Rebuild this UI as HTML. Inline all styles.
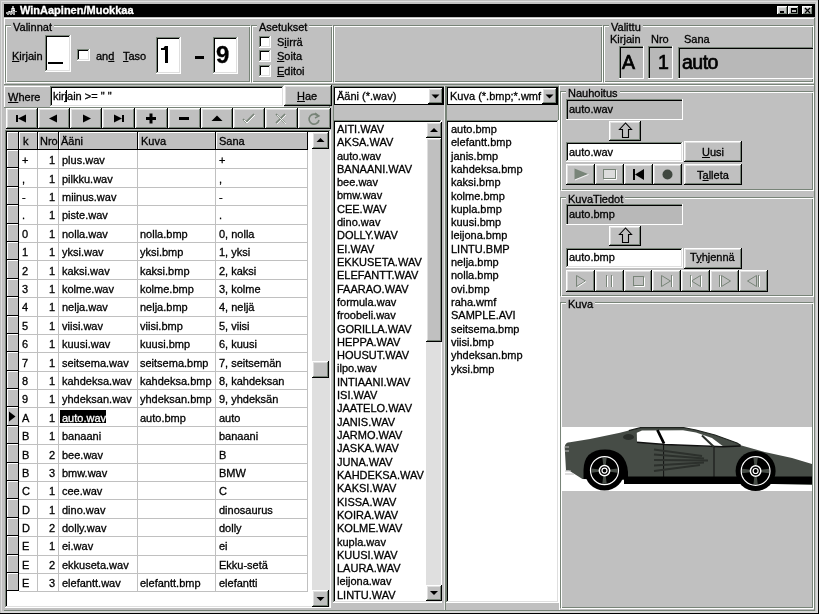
<!DOCTYPE html><html><head><meta charset="utf-8"><style>
html,body{margin:0;padding:0;}
body{width:819px;height:614px;position:relative;overflow:hidden;background:#c0c0c0;font-family:"Liberation Sans",sans-serif;font-size:11px;color:#000;}
.a{position:absolute;}
.t{position:absolute;white-space:nowrap;will-change:transform;-webkit-text-stroke:0.3px currentColor;}
u{text-decoration:underline;text-underline-offset:1px;}
</style></head><body>
<div class="a" style="left:1px;top:1px;width:816px;height:1px;background:#dfdfdf;"></div>
<div class="a" style="left:1px;top:1px;width:1px;height:611px;background:#dfdfdf;"></div>
<div class="a" style="left:816px;top:1px;width:2px;height:612px;background:#d8d8d8;"></div>
<div class="a" style="left:1px;top:611px;width:817px;height:2px;background:#d8d8d8;"></div>
<div class="a" style="left:4px;top:610px;width:555px;height:1px;background:#788478;"></div>
<div class="a" style="left:818px;top:0px;width:1px;height:614px;background:#000;"></div>
<div class="a" style="left:0px;top:613px;width:819px;height:1px;background:#000;"></div>
<div class="a" style="left:4px;top:4px;width:811px;height:13px;background:#000;"></div>
<div class="t" style="left:20px;top:3.19px;font-size:11px;line-height:14px;font-weight:bold;color:#fff;">WinAapinen/Muokkaa</div>
<svg class="a" style="left:5px;top:4px;" width="12" height="12" viewBox="0 0 12 12"><g fill="#a8a8a8"><rect x="7" y="2" width="2" height="3"/><rect x="6" y="4" width="4" height="3"/><rect x="3" y="7" width="7" height="3"/><rect x="1" y="8" width="2" height="2"/><rect x="2" y="10" width="2" height="1"/><rect x="5" y="10" width="2" height="1"/><rect x="8" y="10" width="2" height="1"/><rect x="10" y="7" width="2" height="1"/></g><g fill="#fff"><rect x="7" y="4" width="2" height="1"/><rect x="8" y="6" width="2" height="1"/><rect x="4" y="7" width="1" height="1"/><rect x="6" y="7" width="1" height="1"/></g></svg>
<div class="a" style="left:777px;top:6px;width:11px;height:9px;background:#c0c0c0;box-shadow:inset -1px -1px #000,inset 1px 1px #fff,inset -2px -2px #788478,inset 2px 2px #dfdfdf;"></div>
<div class="a" style="left:788px;top:6px;width:11px;height:9px;background:#c0c0c0;box-shadow:inset -1px -1px #000,inset 1px 1px #fff,inset -2px -2px #788478,inset 2px 2px #dfdfdf;"></div>
<div class="a" style="left:802px;top:6px;width:11px;height:9px;background:#c0c0c0;box-shadow:inset -1px -1px #000,inset 1px 1px #fff,inset -2px -2px #788478,inset 2px 2px #dfdfdf;"></div>
<div class="a" style="left:780px;top:11px;width:4px;height:2px;background:#000;"></div>
<div class="a" style="left:791px;top:8px;width:6px;height:2px;background:#000;"></div>
<div class="a" style="left:791px;top:8px;width:1px;height:5px;background:#000;"></div>
<div class="a" style="left:796px;top:8px;width:1px;height:5px;background:#000;"></div>
<div class="a" style="left:791px;top:12px;width:6px;height:1px;background:#000;"></div>
<svg class="a" style="left:802px;top:6px;" width="11" height="9" viewBox="0 0 11 9"><path d="M3 2 L8 7 M8 2 L3 7" stroke="#000" stroke-width="1.3"/></svg>
<div class="a" style="left:4px;top:18px;width:811px;height:67px;box-shadow:inset -1px -1px #788478,inset 1px 1px #fff;"></div>
<div class="a" style="left:5px;top:25px;width:245px;height:57px;border:1px solid #788478;box-sizing:border-box;"></div>
<div class="a" style="left:6px;top:26px;width:245px;height:57px;border:1px solid #fff;box-sizing:border-box;"></div>
<div class="t" style="left:11px;top:21px;height:12px;padding:0 2px;background:#c0c0c0;font-size:11px;line-height:13px;color:#c0c0c0">Valinnat</div>
<div class="t" style="left:13px;top:20.19px;font-size:11px;line-height:14px;">Valinnat</div>
<div class="t" style="left:12px;top:48.69px;font-size:11px;line-height:14px;"><u>K</u>irjain</div>
<div class="a" style="left:45px;top:35px;width:26px;height:37px;background:#fff;box-shadow:inset -1px -1px #fff,inset 1px 1px #788478,inset -2px -2px #dfdfdf,inset 2px 2px #000;"></div>
<div class="a" style="left:48px;top:62px;width:15px;height:2px;background:#000;"></div>
<div class="a" style="left:77px;top:49px;width:13px;height:12px;background:#fff;box-shadow:inset -1px -1px #fff,inset 1px 1px #788478,inset -2px -2px #dfdfdf,inset 2px 2px #000;"></div>
<div class="t" style="left:96px;top:48.69px;font-size:11px;line-height:14px;">an<u>d</u></div>
<div class="t" style="left:123px;top:48.69px;font-size:11px;line-height:14px;"><u>T</u>aso</div>
<div class="a" style="left:156px;top:37px;width:25px;height:37px;background:#fff;box-shadow:inset -1px -1px #fff,inset 1px 1px #788478,inset -2px -2px #dfdfdf,inset 2px 2px #000;"></div>
<svg class="a" style="left:156px;top:37px;" width="25" height="37" viewBox="0 0 25 37"><path d="M9 9 L12 9 L12 26 L9 26 L9 13 L5 13 L5 11 L7.5 11 L8.5 9.5Z"/></svg>
<div class="a" style="left:195px;top:56px;width:9px;height:3px;background:#000;"></div>
<div class="a" style="left:213px;top:37px;width:25px;height:37px;background:#fff;box-shadow:inset -1px -1px #fff,inset 1px 1px #788478,inset -2px -2px #dfdfdf,inset 2px 2px #000;"></div>
<div class="t" style="left:216px;top:39.68px;font-size:24px;line-height:30px;font-weight:bold;">9</div>
<div class="a" style="left:251px;top:25px;width:81px;height:57px;border:1px solid #788478;box-sizing:border-box;"></div>
<div class="a" style="left:252px;top:26px;width:81px;height:57px;border:1px solid #fff;box-sizing:border-box;"></div>
<div class="t" style="left:257px;top:21px;height:12px;padding:0 2px;background:#c0c0c0;font-size:11px;line-height:13px;color:#c0c0c0">Asetukset</div>
<div class="t" style="left:259px;top:20.19px;font-size:11px;line-height:14px;">Asetukset</div>
<div class="a" style="left:259px;top:36px;width:12px;height:12px;background:#fff;box-shadow:inset -1px -1px #fff,inset 1px 1px #788478,inset -2px -2px #dfdfdf,inset 2px 2px #000;"></div>
<div class="t" style="left:277px;top:35.19px;font-size:11px;line-height:14px;">S<u>i</u>irrä</div>
<div class="a" style="left:259px;top:50px;width:12px;height:12px;background:#fff;box-shadow:inset -1px -1px #fff,inset 1px 1px #788478,inset -2px -2px #dfdfdf,inset 2px 2px #000;"></div>
<div class="t" style="left:277px;top:49.19px;font-size:11px;line-height:14px;"><u>S</u>oita</div>
<div class="a" style="left:259px;top:65px;width:12px;height:12px;background:#fff;box-shadow:inset -1px -1px #fff,inset 1px 1px #788478,inset -2px -2px #dfdfdf,inset 2px 2px #000;"></div>
<div class="t" style="left:277px;top:64.19px;font-size:11px;line-height:14px;"><u>E</u>ditoi</div>
<div class="a" style="left:333px;top:25px;width:269px;height:57px;border:1px solid #788478;box-sizing:border-box;"></div>
<div class="a" style="left:334px;top:26px;width:269px;height:57px;border:1px solid #fff;box-sizing:border-box;"></div>
<div class="a" style="left:603px;top:25px;width:210px;height:57px;border:1px solid #788478;box-sizing:border-box;"></div>
<div class="a" style="left:604px;top:26px;width:210px;height:57px;border:1px solid #fff;box-sizing:border-box;"></div>
<div class="t" style="left:609px;top:20.5px;height:12px;padding:0 2px;background:#c0c0c0;font-size:11px;line-height:13px;color:#c0c0c0">Valittu</div>
<div class="t" style="left:611px;top:19.69px;font-size:11px;line-height:14px;">Valittu</div>
<div class="t" style="left:610px;top:32.19px;font-size:11px;line-height:14px;">Kirjain</div>
<div class="t" style="left:651px;top:32.19px;font-size:11px;line-height:14px;">Nro</div>
<div class="t" style="left:684px;top:32.19px;font-size:11px;line-height:14px;">Sana</div>
<div class="a" style="left:619px;top:46px;width:25px;height:33px;background:#b8b8b8;box-shadow:inset -1px -1px #fff,inset 1px 1px #788478,inset 2px 2px #000;"></div>
<div class="a" style="left:648px;top:46px;width:25px;height:33px;background:#b8b8b8;box-shadow:inset -1px -1px #fff,inset 1px 1px #788478,inset 2px 2px #000;"></div>
<div class="a" style="left:678px;top:47px;width:136px;height:32px;background:#b8b8b8;box-shadow:inset -1px -1px #fff,inset 1px 1px #788478,inset 2px 2px #000;"></div>
<div class="t" style="left:622px;top:49.74px;font-size:19.5px;line-height:24px;-webkit-text-stroke:0.7px #000;">A</div>
<div class="t" style="left:658px;top:49.74px;font-size:19.5px;line-height:24px;-webkit-text-stroke:0.7px #000;">1</div>
<div class="t" style="left:681.5px;top:49.74px;font-size:19.5px;line-height:24px;letter-spacing:-0.5px;-webkit-text-stroke:0.7px #000;">auto</div>
<div class="a" style="left:4px;top:86px;width:326px;height:22px;box-shadow:inset -1px -1px #788478,inset 1px 1px #fff;"></div>
<div class="t" style="left:8px;top:90.19px;font-size:11px;line-height:14px;"><u>W</u>here</div>
<div class="a" style="left:50px;top:86px;width:234px;height:21px;background:#fff;box-shadow:inset -1px -1px #fff,inset 1px 1px #788478,inset -2px -2px #dfdfdf,inset 2px 2px #000;"></div>
<div class="t" style="left:53px;top:88.89px;font-size:11px;line-height:14px;">kirjain &gt;= &quot; &quot;</div>
<div class="a" style="left:65.5px;top:90px;width:1.5px;height:12px;background:#000;"></div>
<div class="a" style="left:284px;top:85px;width:48px;height:21px;background:#c0c0c0;box-shadow:inset -1px -1px #000,inset 1px 1px #fff,inset -2px -2px #788478,inset 2px 2px #dfdfdf;"></div>
<div class="t" style="left:297px;top:89.19px;font-size:11px;line-height:14px;"><u>H</u>ae</div>
<div class="a" style="left:6px;top:108px;width:32px;height:21px;background:#c0c0c0;box-shadow:inset -1px -1px #000,inset 1px 1px #fff,inset -2px -2px #788478,inset 2px 2px #dfdfdf;"></div>
<div class="a" style="left:38px;top:108px;width:32px;height:21px;background:#c0c0c0;box-shadow:inset -1px -1px #000,inset 1px 1px #fff,inset -2px -2px #788478,inset 2px 2px #dfdfdf;"></div>
<div class="a" style="left:70px;top:108px;width:32px;height:21px;background:#c0c0c0;box-shadow:inset -1px -1px #000,inset 1px 1px #fff,inset -2px -2px #788478,inset 2px 2px #dfdfdf;"></div>
<div class="a" style="left:102px;top:108px;width:33px;height:21px;background:#c0c0c0;box-shadow:inset -1px -1px #000,inset 1px 1px #fff,inset -2px -2px #788478,inset 2px 2px #dfdfdf;"></div>
<div class="a" style="left:135px;top:108px;width:33px;height:21px;background:#c0c0c0;box-shadow:inset -1px -1px #000,inset 1px 1px #fff,inset -2px -2px #788478,inset 2px 2px #dfdfdf;"></div>
<div class="a" style="left:168px;top:108px;width:33px;height:21px;background:#c0c0c0;box-shadow:inset -1px -1px #000,inset 1px 1px #fff,inset -2px -2px #788478,inset 2px 2px #dfdfdf;"></div>
<div class="a" style="left:201px;top:108px;width:32px;height:21px;background:#c0c0c0;box-shadow:inset -1px -1px #000,inset 1px 1px #fff,inset -2px -2px #788478,inset 2px 2px #dfdfdf;"></div>
<div class="a" style="left:233px;top:108px;width:32px;height:21px;background:#c0c0c0;box-shadow:inset -1px -1px #000,inset 1px 1px #fff,inset -2px -2px #788478,inset 2px 2px #dfdfdf;"></div>
<div class="a" style="left:265px;top:108px;width:33px;height:21px;background:#c0c0c0;box-shadow:inset -1px -1px #000,inset 1px 1px #fff,inset -2px -2px #788478,inset 2px 2px #dfdfdf;"></div>
<div class="a" style="left:298px;top:108px;width:33px;height:21px;background:#c0c0c0;box-shadow:inset -1px -1px #000,inset 1px 1px #fff,inset -2px -2px #788478,inset 2px 2px #dfdfdf;"></div>
<svg class="a" style="left:6px;top:108px;" width="32" height="21" viewBox="0 0 32 21"><rect x="10" y="7" width="2" height="7"/><path d="M12 10.5 L20 6.5 L20 14.5Z"/></svg>
<svg class="a" style="left:38px;top:108px;" width="32" height="21" viewBox="0 0 32 21"><path d="M11 10.5 L19 6.5 L19 14.5Z"/></svg>
<svg class="a" style="left:70px;top:108px;" width="32" height="21" viewBox="0 0 32 21"><path d="M21 10.5 L13 6.5 L13 14.5Z"/></svg>
<svg class="a" style="left:102px;top:108px;" width="33" height="21" viewBox="0 0 33 21"><path d="M20 10.5 L12 6.5 L12 14.5Z"/><rect x="20" y="7" width="2" height="7"/></svg>
<svg class="a" style="left:135px;top:108px;" width="33" height="21" viewBox="0 0 33 21"><rect x="11" y="9" width="10" height="3"/><rect x="14.5" y="5.5" width="3" height="10"/></svg>
<svg class="a" style="left:168px;top:108px;" width="33" height="21" viewBox="0 0 33 21"><rect x="11" y="9" width="10" height="3"/></svg>
<svg class="a" style="left:201px;top:108px;" width="32" height="21" viewBox="0 0 32 21"><path d="M10.5 13 L16 7.5 L21.5 13Z"/></svg>
<svg class="a" style="left:233px;top:108px;" width="32" height="21" viewBox="0 0 32 21"><path d="M10 11 L13 14 L21 6" stroke="#788478" stroke-width="1.6" fill="none"/><path d="M11 12 L14 15 L22 7" stroke="#fff" stroke-width="1" fill="none"/></svg>
<svg class="a" style="left:265px;top:108px;" width="33" height="21" viewBox="0 0 33 21"><path d="M11 6 L20 15 M20 6 L11 15" stroke="#788478" stroke-width="1.6"/><path d="M12 7 L21 16 M21 7 L12 16" stroke="#fff" stroke-width="0.8"/></svg>
<svg class="a" style="left:298px;top:108px;" width="33" height="21" viewBox="0 0 33 21"><path d="M20 8 A5 5 0 1 0 21 12" stroke="#788478" stroke-width="1.6" fill="none"/><path d="M17 5 L21 8 L17 10" stroke="#788478" stroke-width="1.4" fill="none"/></svg>
<div class="a" style="left:5px;top:130px;width:326px;height:478px;background:#fff;box-shadow:inset -1px -1px #fff,inset 1px 1px #788478,inset -2px -2px #dfdfdf,inset 2px 2px #000;"></div>
<div class="a" style="left:7px;top:132px;width:12px;height:18px;background:#c0c0c0;box-shadow:inset -1px -1px #000,inset 1px 1px #fff;"></div>
<div class="a" style="left:19px;top:132px;width:19px;height:18px;background:#c0c0c0;box-shadow:inset -1px -1px #000,inset 1px 1px #fff;"></div>
<div class="a" style="left:38px;top:132px;width:21px;height:18px;background:#c0c0c0;box-shadow:inset -1px -1px #000,inset 1px 1px #fff;"></div>
<div class="a" style="left:59px;top:132px;width:79px;height:18px;background:#c0c0c0;box-shadow:inset -1px -1px #000,inset 1px 1px #fff;"></div>
<div class="a" style="left:138px;top:132px;width:78px;height:18px;background:#c0c0c0;box-shadow:inset -1px -1px #000,inset 1px 1px #fff;"></div>
<div class="a" style="left:216px;top:132px;width:92px;height:18px;background:#c0c0c0;box-shadow:inset -1px -1px #000,inset 1px 1px #fff;"></div>
<div class="t" style="left:22.5px;top:133.89px;font-size:11px;line-height:14px;">k</div>
<div class="t" style="left:39.5px;top:133.89px;font-size:11px;line-height:14px;">Nro</div>
<div class="t" style="left:61px;top:133.89px;font-size:11px;line-height:14px;">Ääni</div>
<div class="t" style="left:140.5px;top:133.89px;font-size:11px;line-height:14px;">Kuva</div>
<div class="t" style="left:219px;top:133.89px;font-size:11px;line-height:14px;">Sana</div>
<div class="a" style="left:7px;top:150px;width:12px;height:18px;background:#c0c0c0;box-shadow:inset -1px -1px #000,inset 1px 1px #fff;"></div>
<div class="a" style="left:19px;top:168px;width:289px;height:1px;background:#c0c0c0;"></div>
<div class="t" style="left:22px;top:153.29px;font-size:11px;line-height:14px;">+</div>
<div class="t" style="left:37px;top:153.29px;font-size:11px;line-height:14px;width:18px;text-align:right;">1</div>
<div class="t" style="left:61.5px;top:153.29px;font-size:11px;line-height:14px;">plus.wav</div>
<div class="t" style="left:140px;top:153.29px;font-size:11px;line-height:14px;"></div>
<div class="t" style="left:219px;top:153.29px;font-size:11px;line-height:14px;">+</div>
<div class="a" style="left:7px;top:168px;width:12px;height:19px;background:#c0c0c0;box-shadow:inset -1px -1px #000,inset 1px 1px #fff;"></div>
<div class="a" style="left:19px;top:187px;width:289px;height:1px;background:#c0c0c0;"></div>
<div class="t" style="left:22px;top:171.68px;font-size:11px;line-height:14px;">,</div>
<div class="t" style="left:37px;top:171.68px;font-size:11px;line-height:14px;width:18px;text-align:right;">1</div>
<div class="t" style="left:61.5px;top:171.68px;font-size:11px;line-height:14px;">pilkku.wav</div>
<div class="t" style="left:140px;top:171.68px;font-size:11px;line-height:14px;"></div>
<div class="t" style="left:219px;top:171.68px;font-size:11px;line-height:14px;">,</div>
<div class="a" style="left:7px;top:187px;width:12px;height:18px;background:#c0c0c0;box-shadow:inset -1px -1px #000,inset 1px 1px #fff;"></div>
<div class="a" style="left:19px;top:205px;width:289px;height:1px;background:#c0c0c0;"></div>
<div class="t" style="left:22px;top:190.07px;font-size:11px;line-height:14px;">-</div>
<div class="t" style="left:37px;top:190.07px;font-size:11px;line-height:14px;width:18px;text-align:right;">1</div>
<div class="t" style="left:61.5px;top:190.07px;font-size:11px;line-height:14px;">miinus.wav</div>
<div class="t" style="left:140px;top:190.07px;font-size:11px;line-height:14px;"></div>
<div class="t" style="left:219px;top:190.07px;font-size:11px;line-height:14px;">-</div>
<div class="a" style="left:7px;top:205px;width:12px;height:19px;background:#c0c0c0;box-shadow:inset -1px -1px #000,inset 1px 1px #fff;"></div>
<div class="a" style="left:19px;top:224px;width:289px;height:1px;background:#c0c0c0;"></div>
<div class="t" style="left:22px;top:208.46px;font-size:11px;line-height:14px;">.</div>
<div class="t" style="left:37px;top:208.46px;font-size:11px;line-height:14px;width:18px;text-align:right;">1</div>
<div class="t" style="left:61.5px;top:208.46px;font-size:11px;line-height:14px;">piste.wav</div>
<div class="t" style="left:140px;top:208.46px;font-size:11px;line-height:14px;"></div>
<div class="t" style="left:219px;top:208.46px;font-size:11px;line-height:14px;">.</div>
<div class="a" style="left:7px;top:224px;width:12px;height:18px;background:#c0c0c0;box-shadow:inset -1px -1px #000,inset 1px 1px #fff;"></div>
<div class="a" style="left:19px;top:242px;width:289px;height:1px;background:#c0c0c0;"></div>
<div class="t" style="left:22px;top:226.85px;font-size:11px;line-height:14px;">0</div>
<div class="t" style="left:37px;top:226.85px;font-size:11px;line-height:14px;width:18px;text-align:right;">1</div>
<div class="t" style="left:61.5px;top:226.85px;font-size:11px;line-height:14px;">nolla.wav</div>
<div class="t" style="left:140px;top:226.85px;font-size:11px;line-height:14px;">nolla.bmp</div>
<div class="t" style="left:219px;top:226.85px;font-size:11px;line-height:14px;">0, nolla</div>
<div class="a" style="left:7px;top:242px;width:12px;height:18px;background:#c0c0c0;box-shadow:inset -1px -1px #000,inset 1px 1px #fff;"></div>
<div class="a" style="left:19px;top:260px;width:289px;height:1px;background:#c0c0c0;"></div>
<div class="t" style="left:22px;top:245.24px;font-size:11px;line-height:14px;">1</div>
<div class="t" style="left:37px;top:245.24px;font-size:11px;line-height:14px;width:18px;text-align:right;">1</div>
<div class="t" style="left:61.5px;top:245.24px;font-size:11px;line-height:14px;">yksi.wav</div>
<div class="t" style="left:140px;top:245.24px;font-size:11px;line-height:14px;">yksi.bmp</div>
<div class="t" style="left:219px;top:245.24px;font-size:11px;line-height:14px;">1, yksi</div>
<div class="a" style="left:7px;top:260px;width:12px;height:19px;background:#c0c0c0;box-shadow:inset -1px -1px #000,inset 1px 1px #fff;"></div>
<div class="a" style="left:19px;top:279px;width:289px;height:1px;background:#c0c0c0;"></div>
<div class="t" style="left:22px;top:263.63px;font-size:11px;line-height:14px;">2</div>
<div class="t" style="left:37px;top:263.63px;font-size:11px;line-height:14px;width:18px;text-align:right;">1</div>
<div class="t" style="left:61.5px;top:263.63px;font-size:11px;line-height:14px;">kaksi.wav</div>
<div class="t" style="left:140px;top:263.63px;font-size:11px;line-height:14px;">kaksi.bmp</div>
<div class="t" style="left:219px;top:263.63px;font-size:11px;line-height:14px;">2, kaksi</div>
<div class="a" style="left:7px;top:279px;width:12px;height:18px;background:#c0c0c0;box-shadow:inset -1px -1px #000,inset 1px 1px #fff;"></div>
<div class="a" style="left:19px;top:297px;width:289px;height:1px;background:#c0c0c0;"></div>
<div class="t" style="left:22px;top:282.02px;font-size:11px;line-height:14px;">3</div>
<div class="t" style="left:37px;top:282.02px;font-size:11px;line-height:14px;width:18px;text-align:right;">1</div>
<div class="t" style="left:61.5px;top:282.02px;font-size:11px;line-height:14px;">kolme.wav</div>
<div class="t" style="left:140px;top:282.02px;font-size:11px;line-height:14px;">kolme.bmp</div>
<div class="t" style="left:219px;top:282.02px;font-size:11px;line-height:14px;">3, kolme</div>
<div class="a" style="left:7px;top:297px;width:12px;height:19px;background:#c0c0c0;box-shadow:inset -1px -1px #000,inset 1px 1px #fff;"></div>
<div class="a" style="left:19px;top:316px;width:289px;height:1px;background:#c0c0c0;"></div>
<div class="t" style="left:22px;top:300.41px;font-size:11px;line-height:14px;">4</div>
<div class="t" style="left:37px;top:300.41px;font-size:11px;line-height:14px;width:18px;text-align:right;">1</div>
<div class="t" style="left:61.5px;top:300.41px;font-size:11px;line-height:14px;">nelja.wav</div>
<div class="t" style="left:140px;top:300.41px;font-size:11px;line-height:14px;">nelja.bmp</div>
<div class="t" style="left:219px;top:300.41px;font-size:11px;line-height:14px;">4, neljä</div>
<div class="a" style="left:7px;top:316px;width:12px;height:18px;background:#c0c0c0;box-shadow:inset -1px -1px #000,inset 1px 1px #fff;"></div>
<div class="a" style="left:19px;top:334px;width:289px;height:1px;background:#c0c0c0;"></div>
<div class="t" style="left:22px;top:318.80px;font-size:11px;line-height:14px;">5</div>
<div class="t" style="left:37px;top:318.80px;font-size:11px;line-height:14px;width:18px;text-align:right;">1</div>
<div class="t" style="left:61.5px;top:318.80px;font-size:11px;line-height:14px;">viisi.wav</div>
<div class="t" style="left:140px;top:318.80px;font-size:11px;line-height:14px;">viisi.bmp</div>
<div class="t" style="left:219px;top:318.80px;font-size:11px;line-height:14px;">5, viisi</div>
<div class="a" style="left:7px;top:334px;width:12px;height:18px;background:#c0c0c0;box-shadow:inset -1px -1px #000,inset 1px 1px #fff;"></div>
<div class="a" style="left:19px;top:352px;width:289px;height:1px;background:#c0c0c0;"></div>
<div class="t" style="left:22px;top:337.19px;font-size:11px;line-height:14px;">6</div>
<div class="t" style="left:37px;top:337.19px;font-size:11px;line-height:14px;width:18px;text-align:right;">1</div>
<div class="t" style="left:61.5px;top:337.19px;font-size:11px;line-height:14px;">kuusi.wav</div>
<div class="t" style="left:140px;top:337.19px;font-size:11px;line-height:14px;">kuusi.bmp</div>
<div class="t" style="left:219px;top:337.19px;font-size:11px;line-height:14px;">6, kuusi</div>
<div class="a" style="left:7px;top:352px;width:12px;height:19px;background:#c0c0c0;box-shadow:inset -1px -1px #000,inset 1px 1px #fff;"></div>
<div class="a" style="left:19px;top:371px;width:289px;height:1px;background:#c0c0c0;"></div>
<div class="t" style="left:22px;top:355.58px;font-size:11px;line-height:14px;">7</div>
<div class="t" style="left:37px;top:355.58px;font-size:11px;line-height:14px;width:18px;text-align:right;">1</div>
<div class="t" style="left:61.5px;top:355.58px;font-size:11px;line-height:14px;">seitsema.wav</div>
<div class="t" style="left:140px;top:355.58px;font-size:11px;line-height:14px;">seitsema.bmp</div>
<div class="t" style="left:219px;top:355.58px;font-size:11px;line-height:14px;">7, seitsemän</div>
<div class="a" style="left:7px;top:371px;width:12px;height:18px;background:#c0c0c0;box-shadow:inset -1px -1px #000,inset 1px 1px #fff;"></div>
<div class="a" style="left:19px;top:389px;width:289px;height:1px;background:#c0c0c0;"></div>
<div class="t" style="left:22px;top:373.97px;font-size:11px;line-height:14px;">8</div>
<div class="t" style="left:37px;top:373.97px;font-size:11px;line-height:14px;width:18px;text-align:right;">1</div>
<div class="t" style="left:61.5px;top:373.97px;font-size:11px;line-height:14px;">kahdeksa.wav</div>
<div class="t" style="left:140px;top:373.97px;font-size:11px;line-height:14px;">kahdeksa.bmp</div>
<div class="t" style="left:219px;top:373.97px;font-size:11px;line-height:14px;">8, kahdeksan</div>
<div class="a" style="left:7px;top:389px;width:12px;height:18px;background:#c0c0c0;box-shadow:inset -1px -1px #000,inset 1px 1px #fff;"></div>
<div class="a" style="left:19px;top:407px;width:289px;height:1px;background:#c0c0c0;"></div>
<div class="t" style="left:22px;top:392.36px;font-size:11px;line-height:14px;">9</div>
<div class="t" style="left:37px;top:392.36px;font-size:11px;line-height:14px;width:18px;text-align:right;">1</div>
<div class="t" style="left:61.5px;top:392.36px;font-size:11px;line-height:14px;">yhdeksan.wav</div>
<div class="t" style="left:140px;top:392.36px;font-size:11px;line-height:14px;">yhdeksan.bmp</div>
<div class="t" style="left:219px;top:392.36px;font-size:11px;line-height:14px;">9, yhdeksän</div>
<div class="a" style="left:7px;top:407px;width:12px;height:19px;background:#c0c0c0;box-shadow:inset -1px -1px #000,inset 1px 1px #fff;"></div>
<div class="a" style="left:19px;top:426px;width:289px;height:1px;background:#c0c0c0;"></div>
<div class="t" style="left:22px;top:410.75px;font-size:11px;line-height:14px;">A</div>
<div class="t" style="left:37px;top:410.75px;font-size:11px;line-height:14px;width:18px;text-align:right;">1</div>
<div class="a" style="left:60px;top:410px;width:46px;height:13px;background:#000;"></div>
<div class="t" style="left:61.5px;top:410.75px;font-size:11px;line-height:14px;color:#fff;">auto.wav</div>
<div class="t" style="left:140px;top:410.75px;font-size:11px;line-height:14px;">auto.bmp</div>
<div class="t" style="left:219px;top:410.75px;font-size:11px;line-height:14px;">auto</div>
<div class="a" style="left:7px;top:426px;width:12px;height:18px;background:#c0c0c0;box-shadow:inset -1px -1px #000,inset 1px 1px #fff;"></div>
<div class="a" style="left:19px;top:444px;width:289px;height:1px;background:#c0c0c0;"></div>
<div class="t" style="left:22px;top:429.14px;font-size:11px;line-height:14px;">B</div>
<div class="t" style="left:37px;top:429.14px;font-size:11px;line-height:14px;width:18px;text-align:right;">1</div>
<div class="t" style="left:61.5px;top:429.14px;font-size:11px;line-height:14px;">banaani</div>
<div class="t" style="left:140px;top:429.14px;font-size:11px;line-height:14px;"></div>
<div class="t" style="left:219px;top:429.14px;font-size:11px;line-height:14px;">banaani</div>
<div class="a" style="left:7px;top:444px;width:12px;height:19px;background:#c0c0c0;box-shadow:inset -1px -1px #000,inset 1px 1px #fff;"></div>
<div class="a" style="left:19px;top:463px;width:289px;height:1px;background:#c0c0c0;"></div>
<div class="t" style="left:22px;top:447.53px;font-size:11px;line-height:14px;">B</div>
<div class="t" style="left:37px;top:447.53px;font-size:11px;line-height:14px;width:18px;text-align:right;">2</div>
<div class="t" style="left:61.5px;top:447.53px;font-size:11px;line-height:14px;">bee.wav</div>
<div class="t" style="left:140px;top:447.53px;font-size:11px;line-height:14px;"></div>
<div class="t" style="left:219px;top:447.53px;font-size:11px;line-height:14px;">B</div>
<div class="a" style="left:7px;top:463px;width:12px;height:18px;background:#c0c0c0;box-shadow:inset -1px -1px #000,inset 1px 1px #fff;"></div>
<div class="a" style="left:19px;top:481px;width:289px;height:1px;background:#c0c0c0;"></div>
<div class="t" style="left:22px;top:465.92px;font-size:11px;line-height:14px;">B</div>
<div class="t" style="left:37px;top:465.92px;font-size:11px;line-height:14px;width:18px;text-align:right;">3</div>
<div class="t" style="left:61.5px;top:465.92px;font-size:11px;line-height:14px;">bmw.wav</div>
<div class="t" style="left:140px;top:465.92px;font-size:11px;line-height:14px;"></div>
<div class="t" style="left:219px;top:465.92px;font-size:11px;line-height:14px;">BMW</div>
<div class="a" style="left:7px;top:481px;width:12px;height:18px;background:#c0c0c0;box-shadow:inset -1px -1px #000,inset 1px 1px #fff;"></div>
<div class="a" style="left:19px;top:499px;width:289px;height:1px;background:#c0c0c0;"></div>
<div class="t" style="left:22px;top:484.31px;font-size:11px;line-height:14px;">C</div>
<div class="t" style="left:37px;top:484.31px;font-size:11px;line-height:14px;width:18px;text-align:right;">1</div>
<div class="t" style="left:61.5px;top:484.31px;font-size:11px;line-height:14px;">cee.wav</div>
<div class="t" style="left:140px;top:484.31px;font-size:11px;line-height:14px;"></div>
<div class="t" style="left:219px;top:484.31px;font-size:11px;line-height:14px;">C</div>
<div class="a" style="left:7px;top:499px;width:12px;height:19px;background:#c0c0c0;box-shadow:inset -1px -1px #000,inset 1px 1px #fff;"></div>
<div class="a" style="left:19px;top:518px;width:289px;height:1px;background:#c0c0c0;"></div>
<div class="t" style="left:22px;top:502.70px;font-size:11px;line-height:14px;">D</div>
<div class="t" style="left:37px;top:502.70px;font-size:11px;line-height:14px;width:18px;text-align:right;">1</div>
<div class="t" style="left:61.5px;top:502.70px;font-size:11px;line-height:14px;">dino.wav</div>
<div class="t" style="left:140px;top:502.70px;font-size:11px;line-height:14px;"></div>
<div class="t" style="left:219px;top:502.70px;font-size:11px;line-height:14px;">dinosaurus</div>
<div class="a" style="left:7px;top:518px;width:12px;height:18px;background:#c0c0c0;box-shadow:inset -1px -1px #000,inset 1px 1px #fff;"></div>
<div class="a" style="left:19px;top:536px;width:289px;height:1px;background:#c0c0c0;"></div>
<div class="t" style="left:22px;top:521.09px;font-size:11px;line-height:14px;">D</div>
<div class="t" style="left:37px;top:521.09px;font-size:11px;line-height:14px;width:18px;text-align:right;">2</div>
<div class="t" style="left:61.5px;top:521.09px;font-size:11px;line-height:14px;">dolly.wav</div>
<div class="t" style="left:140px;top:521.09px;font-size:11px;line-height:14px;"></div>
<div class="t" style="left:219px;top:521.09px;font-size:11px;line-height:14px;">dolly</div>
<div class="a" style="left:7px;top:536px;width:12px;height:19px;background:#c0c0c0;box-shadow:inset -1px -1px #000,inset 1px 1px #fff;"></div>
<div class="a" style="left:19px;top:555px;width:289px;height:1px;background:#c0c0c0;"></div>
<div class="t" style="left:22px;top:539.48px;font-size:11px;line-height:14px;">E</div>
<div class="t" style="left:37px;top:539.48px;font-size:11px;line-height:14px;width:18px;text-align:right;">1</div>
<div class="t" style="left:61.5px;top:539.48px;font-size:11px;line-height:14px;">ei.wav</div>
<div class="t" style="left:140px;top:539.48px;font-size:11px;line-height:14px;"></div>
<div class="t" style="left:219px;top:539.48px;font-size:11px;line-height:14px;">ei</div>
<div class="a" style="left:7px;top:555px;width:12px;height:18px;background:#c0c0c0;box-shadow:inset -1px -1px #000,inset 1px 1px #fff;"></div>
<div class="a" style="left:19px;top:573px;width:289px;height:1px;background:#c0c0c0;"></div>
<div class="t" style="left:22px;top:557.87px;font-size:11px;line-height:14px;">E</div>
<div class="t" style="left:37px;top:557.87px;font-size:11px;line-height:14px;width:18px;text-align:right;">2</div>
<div class="t" style="left:61.5px;top:557.87px;font-size:11px;line-height:14px;">ekkuseta.wav</div>
<div class="t" style="left:140px;top:557.87px;font-size:11px;line-height:14px;"></div>
<div class="t" style="left:219px;top:557.87px;font-size:11px;line-height:14px;">Ekku-setä</div>
<div class="a" style="left:7px;top:573px;width:12px;height:18px;background:#c0c0c0;box-shadow:inset -1px -1px #000,inset 1px 1px #fff;"></div>
<div class="a" style="left:19px;top:591px;width:289px;height:1px;background:#c0c0c0;"></div>
<div class="t" style="left:22px;top:576.26px;font-size:11px;line-height:14px;">E</div>
<div class="t" style="left:37px;top:576.26px;font-size:11px;line-height:14px;width:18px;text-align:right;">3</div>
<div class="t" style="left:61.5px;top:576.26px;font-size:11px;line-height:14px;">elefantt.wav</div>
<div class="t" style="left:140px;top:576.26px;font-size:11px;line-height:14px;">elefantt.bmp</div>
<div class="t" style="left:219px;top:576.26px;font-size:11px;line-height:14px;">elefantti</div>
<div class="a" style="left:37px;top:150px;width:1px;height:441px;background:#c0c0c0;"></div>
<div class="a" style="left:58px;top:150px;width:1px;height:441px;background:#c0c0c0;"></div>
<div class="a" style="left:137px;top:150px;width:1px;height:441px;background:#c0c0c0;"></div>
<div class="a" style="left:215px;top:150px;width:1px;height:441px;background:#c0c0c0;"></div>
<div class="a" style="left:307px;top:150px;width:1px;height:441px;background:#c0c0c0;"></div>
<svg class="a" style="left:8px;top:411px;" width="9" height="12" viewBox="0 0 9 12"><path d="M1 0.5 L7.5 5.5 L1 10.5Z"/></svg>
<div class="a" style="left:312px;top:132px;width:17px;height:475px;background:#dfdfdf;"></div>
<div class="a" style="left:312px;top:132px;width:17px;height:17px;background:#c0c0c0;box-shadow:inset -1px -1px #000,inset 1px 1px #fff,inset -2px -2px #788478,inset 2px 2px #dfdfdf;"></div>
<svg class="a" style="left:312px;top:132px;" width="17" height="17" viewBox="0 0 17 17"><path d="M4.5 10 L8.5 6 L12.5 10Z"/></svg>
<div class="a" style="left:312px;top:590px;width:17px;height:17px;background:#c0c0c0;box-shadow:inset -1px -1px #000,inset 1px 1px #fff,inset -2px -2px #788478,inset 2px 2px #dfdfdf;"></div>
<svg class="a" style="left:312px;top:590px;" width="17" height="17" viewBox="0 0 17 17"><path d="M4.5 7 L8.5 11 L12.5 7Z"/></svg>
<div class="a" style="left:312px;top:361px;width:17px;height:17px;background:#c0c0c0;box-shadow:inset -1px -1px #000,inset 1px 1px #fff,inset -2px -2px #788478,inset 2px 2px #dfdfdf;"></div>
<div class="a" style="left:333px;top:86px;width:112px;height:34px;background:#c0c0c0;box-shadow:inset 1px 0 #788478,inset -1px 0 #788478;"></div>
<div class="a" style="left:446px;top:86px;width:113px;height:34px;background:#c0c0c0;box-shadow:inset 1px 0 #788478,inset -1px 0 #788478;"></div>
<div class="a" style="left:333px;top:86px;width:111px;height:19px;background:#fff;box-shadow:inset 1px 1px #788478,inset 2px 2px #000,inset -1px -1px #000;"></div>
<div class="t" style="left:337px;top:89.19px;font-size:11px;line-height:14px;">Ääni (*.wav)</div>
<div class="a" style="left:428px;top:88px;width:15px;height:16px;background:#c0c0c0;box-shadow:inset -1px -1px #000,inset 1px 1px #fff,inset -2px -2px #788478,inset 2px 2px #dfdfdf;"></div>
<svg class="a" style="left:428px;top:88px;" width="15" height="16" viewBox="0 0 15 16"><path d="M3.5 6.5 L7.5 10.5 L11.5 6.5Z"/></svg>
<div class="a" style="left:446px;top:86px;width:112px;height:19px;background:#fff;box-shadow:inset 1px 1px #788478,inset 2px 2px #000,inset -1px -1px #000;"></div>
<div class="t" style="left:450px;top:89.19px;font-size:11px;line-height:14px;">Kuva (*.bmp;*.wmf</div>
<div class="a" style="left:542px;top:88px;width:15px;height:16px;background:#c0c0c0;box-shadow:inset -1px -1px #000,inset 1px 1px #fff,inset -2px -2px #788478,inset 2px 2px #dfdfdf;"></div>
<svg class="a" style="left:542px;top:88px;" width="15" height="16" viewBox="0 0 15 16"><path d="M3.5 6.5 L7.5 10.5 L11.5 6.5Z"/></svg>
<div class="a" style="left:333px;top:120px;width:109px;height:483px;background:#fff;box-shadow:inset -1px -1px #fff,inset 1px 1px #788478,inset -2px -2px #dfdfdf,inset 2px 2px #000;"></div>
<div class="a" style="left:446px;top:120px;width:113px;height:483px;background:#fff;box-shadow:inset -1px -1px #fff,inset 1px 1px #788478,inset -2px -2px #dfdfdf,inset 2px 2px #000;"></div>
<div class="t" style="left:337px;top:121.89px;font-size:11px;line-height:14px;">AITI.WAV</div>
<div class="t" style="left:337px;top:135.20px;font-size:11px;line-height:14px;">AKSA.WAV</div>
<div class="t" style="left:337px;top:148.51px;font-size:11px;line-height:14px;">auto.wav</div>
<div class="t" style="left:337px;top:161.82px;font-size:11px;line-height:14px;">BANAANI.WAV</div>
<div class="t" style="left:337px;top:175.13px;font-size:11px;line-height:14px;">bee.wav</div>
<div class="t" style="left:337px;top:188.44px;font-size:11px;line-height:14px;">bmw.wav</div>
<div class="t" style="left:337px;top:201.75px;font-size:11px;line-height:14px;">CEE.WAV</div>
<div class="t" style="left:337px;top:215.06px;font-size:11px;line-height:14px;">dino.wav</div>
<div class="t" style="left:337px;top:228.37px;font-size:11px;line-height:14px;">DOLLY.WAV</div>
<div class="t" style="left:337px;top:241.68px;font-size:11px;line-height:14px;">EI.WAV</div>
<div class="t" style="left:337px;top:254.99px;font-size:11px;line-height:14px;">EKKUSETA.WAV</div>
<div class="t" style="left:337px;top:268.30px;font-size:11px;line-height:14px;">ELEFANTT.WAV</div>
<div class="t" style="left:337px;top:281.61px;font-size:11px;line-height:14px;">FAARAO.WAV</div>
<div class="t" style="left:337px;top:294.92px;font-size:11px;line-height:14px;">formula.wav</div>
<div class="t" style="left:337px;top:308.23px;font-size:11px;line-height:14px;">froobeli.wav</div>
<div class="t" style="left:337px;top:321.54px;font-size:11px;line-height:14px;">GORILLA.WAV</div>
<div class="t" style="left:337px;top:334.85px;font-size:11px;line-height:14px;">HEPPA.WAV</div>
<div class="t" style="left:337px;top:348.16px;font-size:11px;line-height:14px;">HOUSUT.WAV</div>
<div class="t" style="left:337px;top:361.47px;font-size:11px;line-height:14px;">ilpo.wav</div>
<div class="t" style="left:337px;top:374.78px;font-size:11px;line-height:14px;">INTIAANI.WAV</div>
<div class="t" style="left:337px;top:388.09px;font-size:11px;line-height:14px;">ISI.WAV</div>
<div class="t" style="left:337px;top:401.40px;font-size:11px;line-height:14px;">JAATELO.WAV</div>
<div class="t" style="left:337px;top:414.71px;font-size:11px;line-height:14px;">JANIS.WAV</div>
<div class="t" style="left:337px;top:428.02px;font-size:11px;line-height:14px;">JARMO.WAV</div>
<div class="t" style="left:337px;top:441.33px;font-size:11px;line-height:14px;">JASKA.WAV</div>
<div class="t" style="left:337px;top:454.64px;font-size:11px;line-height:14px;">JUNA.WAV</div>
<div class="t" style="left:337px;top:467.95px;font-size:11px;line-height:14px;">KAHDEKSA.WAV</div>
<div class="t" style="left:337px;top:481.26px;font-size:11px;line-height:14px;">KAKSI.WAV</div>
<div class="t" style="left:337px;top:494.57px;font-size:11px;line-height:14px;">KISSA.WAV</div>
<div class="t" style="left:337px;top:507.88px;font-size:11px;line-height:14px;">KOIRA.WAV</div>
<div class="t" style="left:337px;top:521.19px;font-size:11px;line-height:14px;">KOLME.WAV</div>
<div class="t" style="left:337px;top:534.50px;font-size:11px;line-height:14px;">kupla.wav</div>
<div class="t" style="left:337px;top:547.81px;font-size:11px;line-height:14px;">KUUSI.WAV</div>
<div class="t" style="left:337px;top:561.12px;font-size:11px;line-height:14px;">LAURA.WAV</div>
<div class="t" style="left:337px;top:574.43px;font-size:11px;line-height:14px;">leijona.wav</div>
<div class="t" style="left:337px;top:587.74px;font-size:11px;line-height:14px;">LINTU.WAV</div>
<div class="t" style="left:451px;top:121.99px;font-size:11px;line-height:14px;">auto.bmp</div>
<div class="t" style="left:451px;top:135.30px;font-size:11px;line-height:14px;">elefantt.bmp</div>
<div class="t" style="left:451px;top:148.61px;font-size:11px;line-height:14px;">janis.bmp</div>
<div class="t" style="left:451px;top:161.92px;font-size:11px;line-height:14px;">kahdeksa.bmp</div>
<div class="t" style="left:451px;top:175.23px;font-size:11px;line-height:14px;">kaksi.bmp</div>
<div class="t" style="left:451px;top:188.54px;font-size:11px;line-height:14px;">kolme.bmp</div>
<div class="t" style="left:451px;top:201.85px;font-size:11px;line-height:14px;">kupla.bmp</div>
<div class="t" style="left:451px;top:215.16px;font-size:11px;line-height:14px;">kuusi.bmp</div>
<div class="t" style="left:451px;top:228.47px;font-size:11px;line-height:14px;">leijona.bmp</div>
<div class="t" style="left:451px;top:241.78px;font-size:11px;line-height:14px;">LINTU.BMP</div>
<div class="t" style="left:451px;top:255.09px;font-size:11px;line-height:14px;">nelja.bmp</div>
<div class="t" style="left:451px;top:268.40px;font-size:11px;line-height:14px;">nolla.bmp</div>
<div class="t" style="left:451px;top:281.71px;font-size:11px;line-height:14px;">ovi.bmp</div>
<div class="t" style="left:451px;top:295.02px;font-size:11px;line-height:14px;">raha.wmf</div>
<div class="t" style="left:451px;top:308.33px;font-size:11px;line-height:14px;">SAMPLE.AVI</div>
<div class="t" style="left:451px;top:321.64px;font-size:11px;line-height:14px;">seitsema.bmp</div>
<div class="t" style="left:451px;top:334.95px;font-size:11px;line-height:14px;">viisi.bmp</div>
<div class="t" style="left:451px;top:348.26px;font-size:11px;line-height:14px;">yhdeksan.bmp</div>
<div class="t" style="left:451px;top:361.57px;font-size:11px;line-height:14px;">yksi.bmp</div>
<div class="a" style="left:445px;top:86px;width:1px;height:524px;background:#788478;"></div>
<div class="a" style="left:444px;top:86px;width:1px;height:524px;background:#e8e8e8;"></div>
<div class="a" style="left:426px;top:123px;width:15px;height:476px;background:#dfdfdf;"></div>
<div class="a" style="left:426px;top:122px;width:16px;height:16px;background:#c0c0c0;box-shadow:inset -1px -1px #000,inset 1px 1px #fff,inset -2px -2px #788478,inset 2px 2px #dfdfdf;"></div>
<svg class="a" style="left:426px;top:122px;" width="16" height="16" viewBox="0 0 16 16"><path d="M4 10 L8 6 L12 10Z"/></svg>
<div class="a" style="left:426px;top:138px;width:16px;height:204px;background:#c0c0c0;box-shadow:inset -1px -1px #000,inset 1px 1px #fff,inset -2px -2px #788478,inset 2px 2px #dfdfdf;"></div>
<div class="a" style="left:426px;top:585px;width:16px;height:16px;background:#c0c0c0;box-shadow:inset -1px -1px #000,inset 1px 1px #fff,inset -2px -2px #788478,inset 2px 2px #dfdfdf;"></div>
<svg class="a" style="left:426px;top:585px;" width="16" height="16" viewBox="0 0 16 16"><path d="M4 6 L8 10 L12 6Z"/></svg>
<div class="a" style="left:559px;top:85px;width:256px;height:526px;box-shadow:inset -1px -1px #788478,inset 1px 1px #fff;"></div>
<div class="a" style="left:560px;top:91px;width:253px;height:99px;border:1px solid #788478;box-sizing:border-box;"></div>
<div class="a" style="left:561px;top:92px;width:253px;height:99px;border:1px solid #fff;box-sizing:border-box;"></div>
<div class="t" style="left:566px;top:86.5px;height:12px;padding:0 2px;background:#c0c0c0;font-size:11px;line-height:13px;color:#c0c0c0">Nauhoitus</div>
<div class="t" style="left:568px;top:85.69px;font-size:11px;line-height:14px;">Nauhoitus</div>
<div class="a" style="left:566px;top:99px;width:117px;height:21px;background:#b8b8b8;box-shadow:inset -1px -1px #fff,inset 1px 1px #788478,inset 2px 2px #000;"></div>
<div class="t" style="left:569px;top:101.69px;font-size:11px;line-height:14px;">auto.wav</div>
<div class="a" style="left:609px;top:121px;width:32px;height:20px;background:#c0c0c0;box-shadow:inset -1px -1px #000,inset 1px 1px #fff,inset -2px -2px #788478,inset 2px 2px #dfdfdf;"></div>
<svg class="a" style="left:609px;top:121px;" width="32" height="20" viewBox="0 0 32 20"><path d="M16.5 2 L10.5 8.5 L13.5 8.5 L13.5 16.5 L19.5 16.5 L19.5 8.5 L22.5 8.5Z" fill="#c0c0c0" stroke="#000" stroke-width="1.1"/></svg>
<div class="a" style="left:566px;top:142px;width:117px;height:20px;background:#fff;box-shadow:inset -1px -1px #fff,inset 1px 1px #788478,inset -2px -2px #dfdfdf,inset 2px 2px #000;"></div>
<div class="t" style="left:569px;top:145.19px;font-size:11px;line-height:14px;">auto.wav</div>
<div class="a" style="left:684px;top:141px;width:58px;height:21px;background:#c0c0c0;box-shadow:inset -1px -1px #000,inset 1px 1px #fff,inset -2px -2px #788478,inset 2px 2px #dfdfdf;"></div>
<div class="t" style="left:702px;top:144.69px;font-size:11px;line-height:14px;"><u>U</u>usi</div>
<div class="a" style="left:684px;top:164px;width:58px;height:21px;background:#c0c0c0;box-shadow:inset -1px -1px #000,inset 1px 1px #fff,inset -2px -2px #788478,inset 2px 2px #dfdfdf;"></div>
<div class="t" style="left:697px;top:167.69px;font-size:11px;line-height:14px;">T<u>a</u>lleta</div>
<div class="a" style="left:566px;top:164px;width:29px;height:21px;background:#c0c0c0;box-shadow:inset -1px -1px #000,inset 1px 1px #fff,inset -2px -2px #788478,inset 2px 2px #dfdfdf;"></div>
<div class="a" style="left:595px;top:164px;width:29px;height:21px;background:#c0c0c0;box-shadow:inset -1px -1px #000,inset 1px 1px #fff,inset -2px -2px #788478,inset 2px 2px #dfdfdf;"></div>
<div class="a" style="left:624px;top:164px;width:29px;height:21px;background:#c0c0c0;box-shadow:inset -1px -1px #000,inset 1px 1px #fff,inset -2px -2px #788478,inset 2px 2px #dfdfdf;"></div>
<div class="a" style="left:653px;top:164px;width:29px;height:21px;background:#c0c0c0;box-shadow:inset -1px -1px #000,inset 1px 1px #fff,inset -2px -2px #788478,inset 2px 2px #dfdfdf;"></div>
<svg class="a" style="left:566px;top:164px;" width="29" height="21" viewBox="0 0 29 21"><path d="M8.5 4.5 L22 10 L8.5 15.5Z" fill="#788478"/><path d="M9 16 L22.5 10.5" stroke="#fff" stroke-width="0.8"/></svg>
<svg class="a" style="left:595px;top:164px;" width="29" height="21" viewBox="0 0 29 21"><rect x="8.5" y="5.5" width="12" height="9" fill="#dcdcdc" stroke="#788478"/><path d="M9 15.5 H21.5 V6" stroke="#fff" fill="none"/></svg>
<svg class="a" style="left:624px;top:164px;" width="29" height="21" viewBox="0 0 29 21"><rect x="9" y="5" width="2" height="11"/><path d="M11 10.5 L20 5 L20 16Z"/></svg>
<svg class="a" style="left:653px;top:164px;" width="29" height="21" viewBox="0 0 29 21"><circle cx="14.5" cy="10.5" r="5" fill="#404840"/></svg>
<div class="a" style="left:560px;top:197px;width:253px;height:99px;border:1px solid #788478;box-sizing:border-box;"></div>
<div class="a" style="left:561px;top:198px;width:253px;height:99px;border:1px solid #fff;box-sizing:border-box;"></div>
<div class="t" style="left:566px;top:192.8px;height:12px;padding:0 2px;background:#c0c0c0;font-size:11px;line-height:13px;color:#c0c0c0">KuvaTiedot</div>
<div class="t" style="left:568px;top:191.99px;font-size:11px;line-height:14px;">KuvaTiedot</div>
<div class="a" style="left:566px;top:204px;width:117px;height:21px;background:#b8b8b8;box-shadow:inset -1px -1px #fff,inset 1px 1px #788478,inset 2px 2px #000;"></div>
<div class="t" style="left:569px;top:207.19px;font-size:11px;line-height:14px;">auto.bmp</div>
<div class="a" style="left:609px;top:226px;width:32px;height:20px;background:#c0c0c0;box-shadow:inset -1px -1px #000,inset 1px 1px #fff,inset -2px -2px #788478,inset 2px 2px #dfdfdf;"></div>
<svg class="a" style="left:609px;top:226px;" width="32" height="20" viewBox="0 0 32 20"><path d="M16.5 2 L10.5 8.5 L13.5 8.5 L13.5 16.5 L19.5 16.5 L19.5 8.5 L22.5 8.5Z" fill="#c0c0c0" stroke="#000" stroke-width="1.1"/></svg>
<div class="a" style="left:566px;top:248px;width:117px;height:20px;background:#fff;box-shadow:inset -1px -1px #fff,inset 1px 1px #788478,inset -2px -2px #dfdfdf,inset 2px 2px #000;"></div>
<div class="t" style="left:569px;top:250.19px;font-size:11px;line-height:14px;">auto.bmp</div>
<div class="a" style="left:684px;top:248px;width:58px;height:21px;background:#c0c0c0;box-shadow:inset -1px -1px #000,inset 1px 1px #fff,inset -2px -2px #788478,inset 2px 2px #dfdfdf;"></div>
<div class="t" style="left:690px;top:250.19px;font-size:11px;line-height:14px;">T<u>y</u>hjennä</div>
<div class="a" style="left:566px;top:270px;width:29px;height:22px;background:#c0c0c0;box-shadow:inset -1px -1px #000,inset 1px 1px #fff,inset -2px -2px #788478,inset 2px 2px #dfdfdf;"></div>
<div class="a" style="left:595px;top:270px;width:29px;height:22px;background:#c0c0c0;box-shadow:inset -1px -1px #000,inset 1px 1px #fff,inset -2px -2px #788478,inset 2px 2px #dfdfdf;"></div>
<div class="a" style="left:624px;top:270px;width:28px;height:22px;background:#c0c0c0;box-shadow:inset -1px -1px #000,inset 1px 1px #fff,inset -2px -2px #788478,inset 2px 2px #dfdfdf;"></div>
<div class="a" style="left:652px;top:270px;width:29px;height:22px;background:#c0c0c0;box-shadow:inset -1px -1px #000,inset 1px 1px #fff,inset -2px -2px #788478,inset 2px 2px #dfdfdf;"></div>
<div class="a" style="left:681px;top:270px;width:29px;height:22px;background:#c0c0c0;box-shadow:inset -1px -1px #000,inset 1px 1px #fff,inset -2px -2px #788478,inset 2px 2px #dfdfdf;"></div>
<div class="a" style="left:710px;top:270px;width:29px;height:22px;background:#c0c0c0;box-shadow:inset -1px -1px #000,inset 1px 1px #fff,inset -2px -2px #788478,inset 2px 2px #dfdfdf;"></div>
<div class="a" style="left:739px;top:270px;width:29px;height:22px;background:#c0c0c0;box-shadow:inset -1px -1px #000,inset 1px 1px #fff,inset -2px -2px #788478,inset 2px 2px #dfdfdf;"></div>
<svg class="a" style="left:566px;top:270px;" width="29" height="22" viewBox="0 0 29 22"><path d="M10.5 5.5 L19.5 11 L10.5 16.5Z" stroke="#788478" fill="none" stroke-width="1"/><path d="M11.5 17 L20 11.5" stroke="#fff" fill="none" stroke-width="1"/></svg>
<svg class="a" style="left:595px;top:270px;" width="29" height="22" viewBox="0 0 29 22"><path d="M11.5 5 V17 M16.5 5 V17" stroke="#788478" fill="none" stroke-width="1"/><path d="M12.5 6 V17 M17.5 6 V17" stroke="#fff" fill="none" stroke-width="1"/></svg>
<svg class="a" style="left:624px;top:270px;" width="29" height="22" viewBox="0 0 29 22"><rect x="9.5" y="6.5" width="10" height="9" stroke="#788478" fill="none" stroke-width="1"/><path d="M10.5 16.5 H20.5 V7.5" stroke="#fff" fill="none" stroke-width="1"/></svg>
<svg class="a" style="left:652px;top:270px;" width="29" height="22" viewBox="0 0 29 22"><path d="M9.5 5.5 L18.5 11 L9.5 16.5Z M19.5 5 V17" stroke="#788478" fill="none" stroke-width="1"/><path d="M20.5 6 V17" stroke="#fff" fill="none" stroke-width="1"/></svg>
<svg class="a" style="left:681px;top:270px;" width="29" height="22" viewBox="0 0 29 22"><path d="M9.5 5 V17 M19.5 5.5 L10.5 11 L19.5 16.5Z" stroke="#788478" fill="none" stroke-width="1"/><path d="M10.5 6 V17 M20.5 6 V17" stroke="#fff" fill="none" stroke-width="1"/></svg>
<svg class="a" style="left:710px;top:270px;" width="29" height="22" viewBox="0 0 29 22"><path d="M9.5 5 V17 M11.5 5.5 L20.5 11 L11.5 16.5Z" stroke="#788478" fill="none" stroke-width="1"/><path d="M10.5 6 V17" stroke="#fff" fill="none" stroke-width="1"/></svg>
<svg class="a" style="left:739px;top:270px;" width="29" height="22" viewBox="0 0 29 22"><path d="M19.5 5 V17 M17.5 5.5 L8.5 11 L17.5 16.5Z" stroke="#788478" fill="none" stroke-width="1"/><path d="M20.5 6 V17" stroke="#fff" fill="none" stroke-width="1"/></svg>
<div class="a" style="left:560px;top:302px;width:253px;height:306px;border:1px solid #788478;box-sizing:border-box;"></div>
<div class="a" style="left:561px;top:303px;width:253px;height:306px;border:1px solid #fff;box-sizing:border-box;"></div>
<div class="t" style="left:566px;top:297.6px;height:12px;padding:0 2px;background:#c0c0c0;font-size:11px;line-height:13px;color:#c0c0c0">Kuva</div>
<div class="t" style="left:568px;top:296.79px;font-size:11px;line-height:14px;">Kuva</div>
<div class="a" style="left:562px;top:427px;width:250px;height:64px;background:#fff;"></div>
<svg class="a" style="left:562px;top:427px;" width="250" height="64" viewBox="0 0 250 64">
<path d="M2.7 20 Q3 15.4 8 15.2 L28 12 L58 5.8 L66.8 3.6 L78.5 0.7 L121 0.5 L134 3 L153 8 L175 16 L178.6 18.3 L202.7 25 L230 31 L250 37 L250 58 L20.4 52 L7 43.5 L4 43.5Z" fill="#464c46"/>
<path d="M66.8 3.6 L78.5 0.7 L121 0.5 L134 3 L153 8 L175 16 L178.6 18.3" stroke="#1e221e" stroke-width="1.2" fill="none"/>
<path d="M74.8 5.8 L80 3.4 L121 3.2 L134 5.5 L150 11 L161 19.2 L151.8 19.7 L103 17.5 L75 15.3Z" fill="#fff"/>
<path d="M75 15.3 L103 17.5 L161 19.7 L178.6 19" stroke="#111" stroke-width="1.4" fill="none"/>
<path d="M95.4 3 L102 16.5" stroke="#000" stroke-width="2.8"/>
<path d="M140 8.5 L151.8 19.7" stroke="#2a2e2a" stroke-width="2"/>
<path d="M101.6 17 V51 M152 20 V51" stroke="#111" stroke-width="1"/>
<ellipse cx="66.5" cy="10" rx="5.5" ry="3" fill="#2a2e2a"/>
<g stroke="#2c302c" stroke-width="1.8">
<path d="M92 22.5 L140 29"/><path d="M92 27.5 L142 31.5"/><path d="M92 33 L146 33.5"/><path d="M92 38.5 L142 35.5"/><path d="M92 44 L138 38"/>
</g>
<path d="M62 49.6 L250 49.6 L250 57 L62 57Z" fill="#000"/>
<path d="M21.5 43 Q22 22.5 43 22.5 Q64 22.5 66 45 L66 52 L21.5 52Z" fill="#000"/>
<circle cx="42.5" cy="43.6" r="20" fill="#000"/>
<path d="M42.5 30.400000000000002 L40.3 30.6 L41.3 38.1 L43.7 38.1 L44.7 30.6Z M42.5 56.800000000000004 L40.3 56.6 L41.3 49.1 L43.7 49.1 L44.7 56.6Z M29.3 43.6 L29.5 41.4 L37.0 42.4 L37.0 44.800000000000004 L29.5 45.800000000000004Z M55.7 43.6 L55.5 41.4 L48.0 42.4 L48.0 44.800000000000004 L55.5 45.800000000000004Z" fill="#464c46"/>
<g fill="none" stroke="#fff"><circle cx="42.5" cy="43.6" r="14" stroke-width="1.2"/>
<circle cx="42.5" cy="43.6" r="5.2" stroke-width="1.5"/>
<circle cx="42.5" cy="43.6" r="2.5" stroke-width="1.2"/></g>
<circle cx="193.6" cy="44" r="20" fill="#000"/>
<path d="M193.6 30.400000000000002 L191.4 30.6 L192.4 38.5 L194.79999999999998 38.5 L195.79999999999998 30.6Z M193.6 57.6 L191.4 57.4 L192.4 49.5 L194.79999999999998 49.5 L195.79999999999998 57.4Z M180.0 44 L180.2 41.8 L188.1 42.8 L188.1 45.2 L180.2 46.2Z M207.2 44 L207.0 41.8 L199.1 42.8 L199.1 45.2 L207.0 46.2Z" fill="#464c46"/>
<g fill="none" stroke="#fff"><circle cx="193.6" cy="44" r="14.4" stroke-width="1.2"/>
<circle cx="193.6" cy="44" r="5.2" stroke-width="1.5"/>
<circle cx="193.6" cy="44" r="2.5" stroke-width="1.2"/></g>
<path d="M3 20 H7 M3 24 H7 M3 44 H9 M3 47 H12" stroke="#bbb" stroke-width="1"/>
</svg>
</body></html>
